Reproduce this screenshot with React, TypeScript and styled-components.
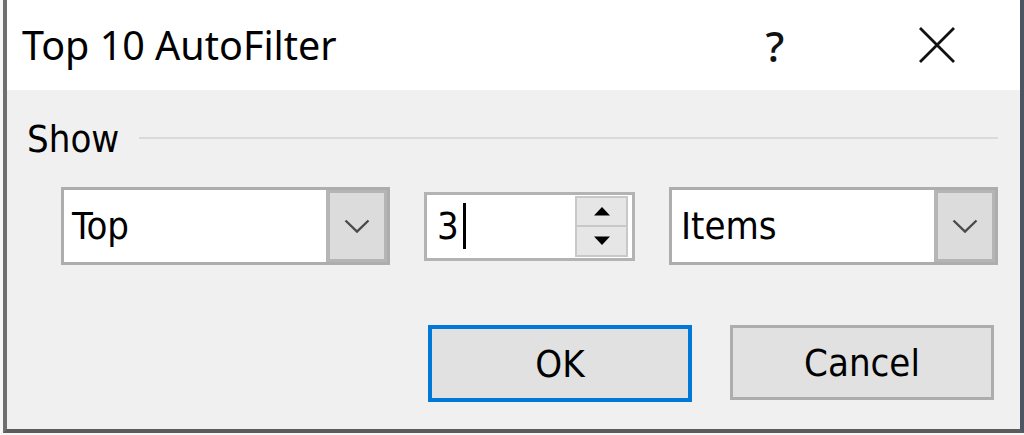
import React from 'react'
import styled, { createGlobalStyle } from 'styled-components'

const UI_FONT = '"DejaVu Sans Condensed", "DejaVu Sans", sans-serif'
const TITLE_FONT = '"Noto Sans", "Open Sans", sans-serif'

const GlobalStyle = createGlobalStyle`
  html, body {
    margin: 0;
    padding: 0;
    background: #f7f7f7;
  }
  #root {
    width: 1024px;
    height: 435px;
    overflow: hidden;
  }
`

const Window = styled.div`
  box-sizing: border-box;
  margin-left: 3px;
  width: 1021px;
  height: 433px;
  display: flex;
  flex-direction: column;
  border-left: 4px solid #6f6f6f;
  border-right: 4px solid #4d5660;
  border-bottom: 4px solid #5c5c5c;
  background: #f0f0f0;
`

const TitleBar = styled.div`
  height: 90px;
  flex: none;
  display: flex;
  align-items: center;
  background: #fff;
  padding: 0 16px 0 15px;
`

const Title = styled.span`
  font-family: ${TITLE_FONT};
  font-size: 39.5px;
  color: #000;
  margin-right: auto;
`

const CaptionButton = styled.div<{ $width: number; $gap?: number }>`
  width: ${(p) => p.$width}px;
  margin-right: ${(p) => p.$gap ?? 0}px;
  height: 90px;
  display: flex;
  align-items: center;
  justify-content: center;
  font-family: ${TITLE_FONT};
  font-size: 42px;
  font-weight: 500;
  color: #111;
`

const Body = styled.div`
  flex: 1;
  display: flex;
  flex-direction: column;
`

const GroupHeader = styled.div`
  display: flex;
  align-items: center;
  height: 44px;
  padding: 27px 22px 0 20px;
`

const Label = styled.span`
  font-family: ${UI_FONT};
  font-size: 38px;
  line-height: 44px;
  color: #000;
`

const Rule = styled.div`
  flex: 1;
  height: 2px;
  margin-left: 20px;
  margin-top: -3px;
  background: #dadada;
`

const ControlsRow = styled.div`
  display: flex;
  align-items: center;
  gap: 34px;
  height: 78px;
  margin-top: 26px;
  padding-left: 54px;
`

const Combo = styled.div`
  box-sizing: border-box;
  width: 329px;
  height: 78px;
  display: flex;
  border: 3px solid #adadad;
  background: #fff;
`

const FieldText = styled.span<{ $pad: number }>`
  flex: 1;
  display: flex;
  align-items: center;
  padding-left: ${(p) => p.$pad}px;
  font-family: ${UI_FONT};
  font-size: 38px;
  color: #000;
`

const DropButton = styled.div`
  box-sizing: border-box;
  width: 61px;
  display: flex;
  align-items: center;
  justify-content: center;
  background: #dcdcdc;
  border: 3px solid #b5b5b5;
  border-left-width: 4px;
`

const Spin = styled.div`
  box-sizing: border-box;
  width: 211px;
  height: 69px;
  display: flex;
  border: 3px solid #b3b3b3;
  background: #fff;
  padding: 1px 4px 1px 0;
`

const Caret = styled.span`
  display: inline-block;
  width: 3px;
  height: 46px;
  margin-left: 4px;
  background: #000;
`

const SpinButtons = styled.div`
  width: 53px;
  display: flex;
  flex-direction: column;
`

const SpinButton = styled.div`
  box-sizing: border-box;
  flex: 1;
  display: flex;
  align-items: center;
  justify-content: center;
  background: #e6e6e6;
  border: 2px solid #c8c8c8;
  & + & {
    border-top: none;
  }
`

const ButtonRow = styled.div`
  display: flex;
  justify-content: flex-end;
  align-items: flex-start;
  gap: 38px;
  margin-top: 60px;
  padding-right: 26px;
`

const DialogButton = styled.div<{ $default?: boolean }>`
  box-sizing: border-box;
  width: 264px;
  height: ${(p) => (p.$default ? 77 : 75)}px;
  display: flex;
  align-items: center;
  justify-content: center;
  background: #e1e1e1;
  border: ${(p) => (p.$default ? '4px solid #0078d7' : '3px solid #adadad')};
  font-family: ${UI_FONT};
  font-size: 38px;
  color: #000;
`

const Chevron = () => (
  <svg width="26" height="15" viewBox="0 0 26 15">
    <path d="M1.5 1.5 L13 12.5 L24.5 1.5" fill="none" stroke="#4a4a4a" strokeWidth="2.4" />
  </svg>
)

const Triangle = ({ up }: { up?: boolean }) => (
  <svg width="18" height="10" viewBox="0 0 18 10">
    <path d={up ? 'M1 9.5 L9 1 L17 9.5 Z' : 'M1 0.5 L9 9 L17 0.5 Z'} fill="#000" />
  </svg>
)

const CloseIcon = () => (
  <svg width="38" height="38" viewBox="0 0 38 38">
    <path d="M2 2 L36 36 M36 2 L2 36" stroke="#111" strokeWidth="2.8" fill="none" />
  </svg>
)

export default function App() {
  return (
    <>
      <GlobalStyle />
      <Window>
        <TitleBar>
          <Title>Top 10 AutoFilter</Title>
          <CaptionButton $width={96} $gap={47}>
            ?
          </CaptionButton>
          <CaptionButton $width={134}>
            <CloseIcon />
          </CaptionButton>
        </TitleBar>
        <Body>
          <GroupHeader>
            <Label>Show</Label>
            <Rule />
          </GroupHeader>
          <ControlsRow>
            <Combo>
              <FieldText $pad={8}>Top</FieldText>
              <DropButton>
                <Chevron />
              </DropButton>
            </Combo>
            <Spin>
              <FieldText $pad={10}>
                3<Caret />
              </FieldText>
              <SpinButtons>
                <SpinButton>
                  <Triangle up />
                </SpinButton>
                <SpinButton>
                  <Triangle />
                </SpinButton>
              </SpinButtons>
            </Spin>
            <Combo>
              <FieldText $pad={9}>Items</FieldText>
              <DropButton>
                <Chevron />
              </DropButton>
            </Combo>
          </ControlsRow>
          <ButtonRow>
            <DialogButton $default>OK</DialogButton>
            <DialogButton>Cancel</DialogButton>
          </ButtonRow>
        </Body>
      </Window>
    </>
  )
}
